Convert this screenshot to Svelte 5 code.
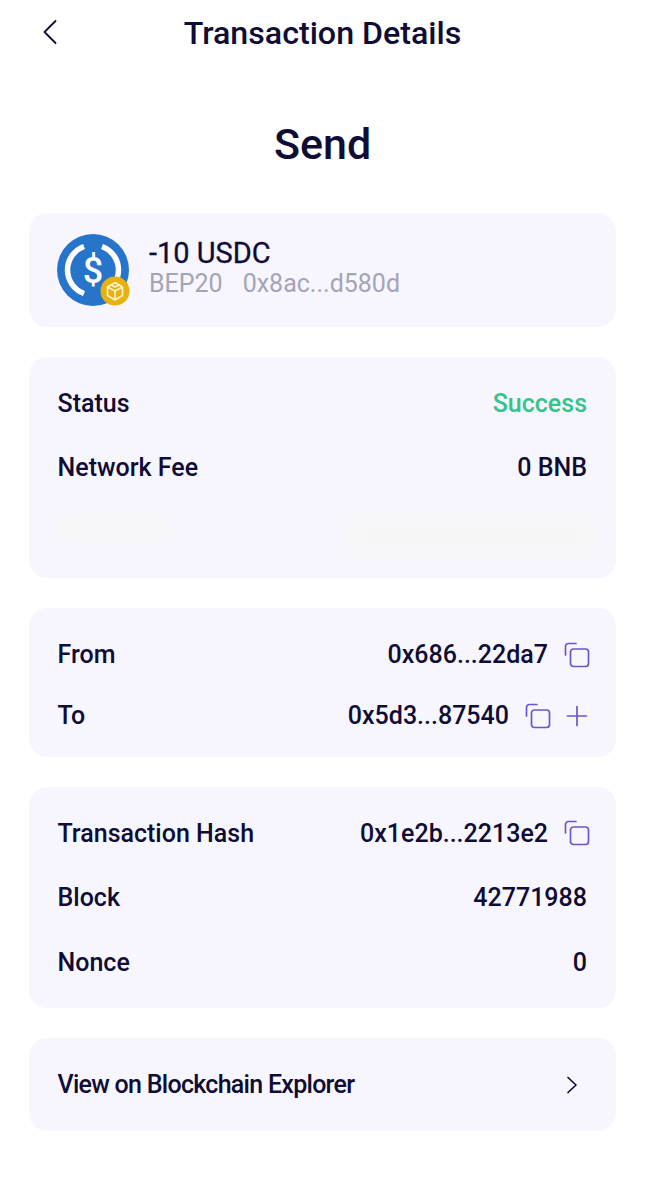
<script>
  const transfers = [
    { label: "From", value: "0x686...22da7", add: false },
    { label: "To", value: "0x5d3...87540", add: true },
  ];
  const chain = [
    { label: "Block", value: "42771988" },
    { label: "Nonce", value: "0" },
  ];
</script>

{#snippet copyIcon()}
  <svg class="icon" width="26" height="26" viewBox="0 0 26 26" fill="none" stroke="#6b57c9" stroke-width="1.7" stroke-linecap="round">
    <path d="M1.5 13V4.5a3 3 0 0 1 3-3h7.5" />
    <rect x="6.5" y="7" width="18" height="17.5" rx="3" />
  </svg>
{/snippet}

<div class="page">
  <header class="topbar">
    <svg class="back" width="16" height="26" viewBox="0 0 16 26" fill="none" stroke="#0f0c35" stroke-width="1.8" stroke-linecap="round" stroke-linejoin="round">
      <path d="M13.5 2 2.5 13l11 11" />
    </svg>
    <h1>Transaction Details</h1>
  </header>

  <h2>Send</h2>

  <section class="card asset">
    <div class="logo">
      <svg width="72" height="72" viewBox="0 0 72 72">
        <circle cx="36" cy="36" r="36" fill="#2775ca" />
        <path d="M27 12.500a25 25 0 0 0 0 47M45 12.500a25 25 0 0 1 0 47" fill="none" stroke="#fff" stroke-width="5.500" />
        <text x="36" y="49" text-anchor="middle" class="dollar">$</text>
      </svg>
      <svg class="badge" width="30" height="30" viewBox="0 0 30 30">
        <circle cx="15" cy="15" r="14.500" fill="#e9b10f" />
        <path d="M15 6.500 22.500 11v8.500L15 24l-7.500-4.500V11zM15 15l7.500-4M15 15l-7.500-4M15 15v9M11.500 9 15 11l3.500-2" fill="none" stroke="#fff3c4" stroke-width="1.700" stroke-linejoin="round" />
      </svg>
    </div>
    <div class="asset-text">
      <div class="amount">-10 USDC</div>
      <div class="sub"><span>BEP20</span><span>0x8ac...d580d</span></div>
    </div>
  </section>

  <section class="card">
    <div class="row"><span>Status</span><span class="success">Success</span></div>
    <div class="row"><span>Network Fee</span><span>0 BNB</span></div>
    <div class="row smudges" aria-hidden="true">
      <div class="smudge short"></div>
      <div class="smudge long"></div>
    </div>
  </section>

  <section class="card tight">
    {#each transfers as t}
      <div class="row">
        <span>{t.label}</span>
        <div class="value">
          <span>{t.value}</span>
          {@render copyIcon()}
          {#if t.add}
            <svg class="icon plus" width="22" height="22" viewBox="0 0 22 22" stroke="#6b57c9" stroke-width="1.700" stroke-linecap="round">
              <path d="M11 1.500v19M1.500 11h19" />
            </svg>
          {/if}
        </div>
      </div>
    {/each}
  </section>

  <section class="card">
    <div class="row">
      <span>Transaction Hash</span>
      <div class="value"><span>0x1e2b...2213e2</span>{@render copyIcon()}</div>
    </div>
    {#each chain as c}
      <div class="row"><span>{c.label}</span><span>{c.value}</span></div>
    {/each}
  </section>

  <section class="card explorer">
    <span>View on Blockchain Explorer</span>
    <svg width="12" height="18" viewBox="0 0 12 18" fill="none" stroke="#0f0c35" stroke-width="1.700" stroke-linecap="round" stroke-linejoin="round">
      <path d="M2 1.500 10 9l-8 7.500" />
    </svg>
  </section>
</div>

<style>
  :global(body) {
    background: #fff;
  }

  .page {
    width: 645px;
    height: 1200px;
    box-sizing: border-box;
    padding: 0 29px;
    font-family: Roboto, "Noto Sans", sans-serif;
    font-weight: 500;
    font-size: 25px;
    color: #0f0c35;
    overflow: hidden;
  }

  .topbar {
    height: 66px;
    display: flex;
    align-items: center;
    justify-content: center;
    position: relative;
  }

  .back {
    position: absolute;
    left: 13px;
    top: 19px;
  }

  h1 {
    margin: 0;
    font-size: 32.2px;
    font-weight: 500;
  }

  h2 {
    margin: 0;
    height: 147px;
    padding-top: 51px;
    box-sizing: border-box;
    text-align: center;
    font-size: 43px;
    line-height: 54px;
    font-weight: 500;
  }

  .card {
    background: #f7f6fe;
    border-radius: 18px;
    padding: 14px 29px 13.5px 28.5px;
    margin-bottom: 30px;
  }

  .row {
    height: 64.5px;
    display: flex;
    align-items: center;
    justify-content: space-between;
  }

  .tight .row {
    height: 61px;
  }

  .tight {
    padding-top: 16px;
    padding-bottom: 11px;
  }

  .value {
    display: flex;
    align-items: center;
    gap: 16px;
    margin-right: -3px;
  }

  .icon {
    flex: none;
  }

  .plus {
    margin-left: -1px;
    margin-right: 2px;
  }

  .success {
    color: #33c48a;
  }

  .smudges {
    align-items: flex-start;
    padding-top: 14px;
    box-sizing: border-box;
    margin-right: -12px;
  }

  .smudge {
    background: #f6f6f7;
    border-radius: 16px;
    filter: blur(7px);
  }

  .short {
    width: 112px;
    height: 30px;
  }

  .long {
    width: 255px;
    height: 44px;
  }

  .asset {
    height: 114px;
    box-sizing: border-box;
    padding: 0 28px;
    display: flex;
    align-items: center;
    gap: 20px;
  }

  .logo {
    position: relative;
    width: 72px;
    height: 72px;
    flex: none;
  }

  .logo svg {
    display: block;
  }

  .badge {
    position: absolute;
    right: -1px;
    bottom: 0;
  }

  .dollar {
    fill: #fff;
    font-size: 36px;
    font-weight: 500;
  }

  .asset-text {
    margin-top: -5px;
  }

  .amount {
    font-size: 29px;
    line-height: 32px;
    font-weight: 400;
    -webkit-text-stroke: 0.3px #0f0c35;
  }

  .sub {
    font-size: 25px;
    line-height: 30px;
    font-weight: 400;
    color: #a5a4b6;
    display: flex;
    gap: 20px;
  }

  .explorer {
    height: 93px;
    box-sizing: border-box;
    padding: 0 38px 0 28.5px;
    display: flex;
    align-items: center;
    justify-content: space-between;
    margin-bottom: 0;
    letter-spacing: -0.72px;
  }
</style>
